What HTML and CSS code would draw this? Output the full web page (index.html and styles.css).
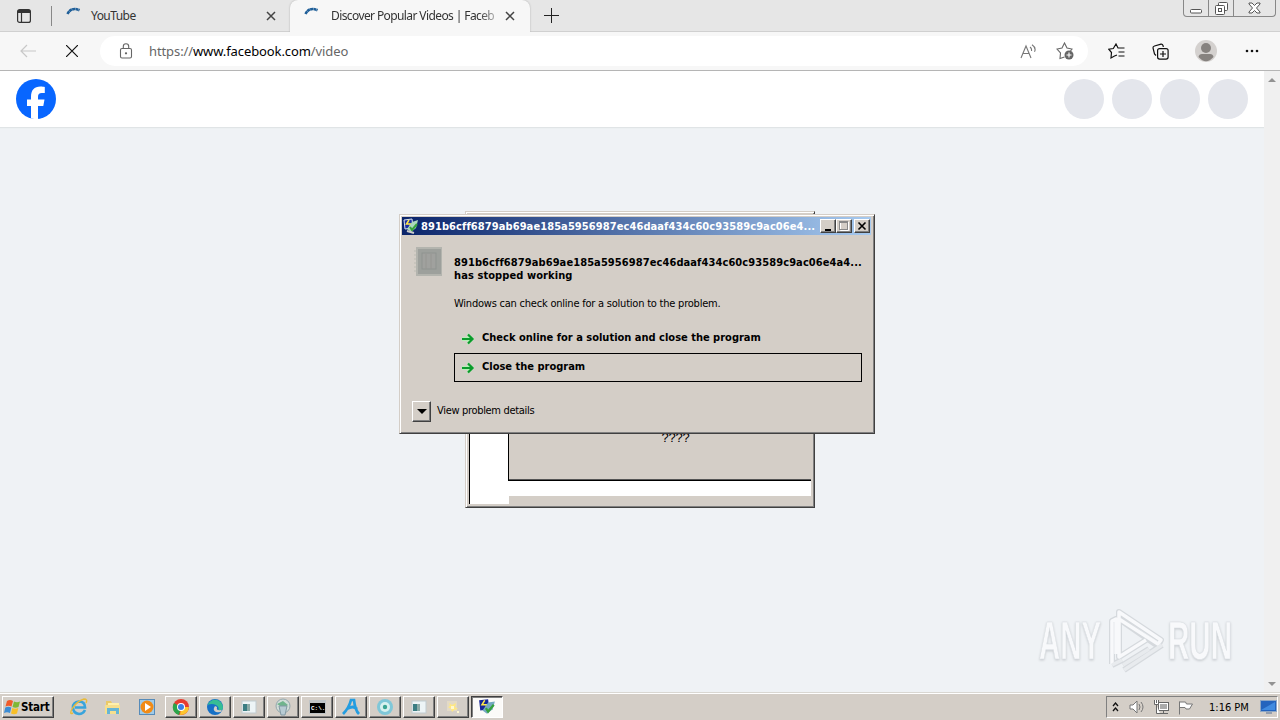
FILE: index.html
```html
<!DOCTYPE html>
<html lang="en">
<head>
    <meta charset="UTF-8">
    <meta name="viewport" content="width=device-width, initial-scale=1.0">
    <title>Discover Popular Videos | Facebook</title>
    <link rel="stylesheet" href="styles.css">
</head>
<body>
    <!-- Tabs -->
    <header class="tab-strip">
        <div class="tab-actions">
            <svg width="16" height="16" viewBox="0 0 16 16" fill="none" stroke="#333" stroke-width="1.2"><rect x="1.6" y="1.6" width="12.8" height="12.8" rx="2"/><path d="M2 3.5h12" stroke-width="3"/><path d="M5.5 4v10"/></svg>
        </div>
        <div class="tab">
            <svg class="spinner" width="16" height="16" viewBox="0 0 16 16" fill="none" stroke="#1f5f99" stroke-width="2.6"><path d="M1.500 7Q5.500 -.5 13.500 3.200" stroke-dasharray="3 .3"/></svg>
            <span class="tab-title">YouTube</span>
            <svg class="tab-close" width="10" height="10" viewBox="0 0 10 10" stroke="#444" stroke-width="1.5"><path d="M1 1l8 8M9 1l-8 8"/></svg>
        </div>
        <div class="tab active">
            <svg class="spinner" width="16" height="16" viewBox="0 0 16 16" fill="none" stroke="#1f5f99" stroke-width="2.6"><path d="M1.500 7Q5.500 -.5 13.500 3.200" stroke-dasharray="3 .3"/></svg>
            <span class="tab-title faded">Discover Popular Videos | Faceb</span>
            <svg class="tab-close" width="10" height="10" viewBox="0 0 10 10" stroke="#444" stroke-width="1.5"><path d="M1 1l8 8M9 1l-8 8"/></svg>
        </div>
        <svg class="new-tab" width="15" height="15" viewBox="0 0 15 15" stroke="#222"><path d="M0 7.500h15M7.500 0v15"/></svg>
        <div class="caption-buttons">
            <span class="caption-min"><svg width="13" height="6" viewBox="0 0 13 6"><rect x=".5" y="1.500" width="11" height="3.500" rx="1" fill="#fff" stroke="#555"/></svg></span>
            <span class="caption-restore"><svg width="13" height="13" viewBox="0 0 13 13" fill="#fff" stroke="#555"><rect x="3.500" y=".5" width="9" height="8" rx="1"/><rect x=".5" y="3.500" width="9" height="9" rx="1"/><rect x="3.500" y="6.500" width="3" height="3"/></svg></span>
            <span class="caption-close"><svg width="13" height="12" viewBox="0 0 13 12" fill="#fff" stroke="#555"><path d="M1 1h3l2.500 2.500L9 1h3v1L8.500 6l3.500 4v1H9L6.500 8.500 4 11H1v-1l3.500-4L1 2z"/></svg></span>
        </div>
    </header>

    <!-- Address bar -->
    <nav class="toolbar">
        <svg class="back" width="16" height="14" viewBox="0 0 16 14" fill="none" stroke="#c8c8c8" stroke-width="1.2"><path d="M16 7H1M7 1L1 7l6 6"/></svg>
        <svg class="stop" width="12" height="12" viewBox="0 0 12 12" stroke="#111" stroke-width="1.200"><path d="M0 0l12 12M12 0L0 12"/></svg>
        <div class="address">
            <svg class="lock" width="14" height="16" viewBox="0 0 14 16" fill="none" stroke="#666" stroke-width="1.100"><rect x="1.500" y="5.500" width="11" height="9.500" rx="1.500"/><path d="M4.300 5V3.500a2.700 2.700 0 015.400 0V5"/><circle cx="7" cy="10.300" r=".6" fill="#666"/></svg>
            <span class="url"><span>https://</span><b>www.facebook.com</b><span>/video</span></span>
            <svg class="read" width="17" height="15" viewBox="0 0 17 15" fill="none" stroke="#777" stroke-width="1.100"><path d="M1 14L6 2l5 12M3 9.500h6M10 3q2 1.500 1.500 4M12 .8q4.500 3 2.500 7"/></svg>
            <svg class="fav" width="18" height="18" viewBox="0 0 18 18" fill="none" stroke="#666" stroke-width="1.100"><path d="M8.500 15L4 16.500l.5-5.500L1 7l5-1 2.500-5L11 6l5 1-1.500 2"/><circle cx="13" cy="13" r="4.500" fill="#666" stroke="none"/><path d="M13 10.500v5M10.500 13h5" stroke="#fff"/></svg>
        </div>
        <svg class="tool" width="17" height="17" viewBox="0 0 17 17" fill="none" stroke="#111" stroke-width="1.200"><path d="M9 12l-2.500 1L3 15l.5-5.500L.8 6.200 5.300 5.500 8 1l2 4h6.500M10.500 9h6M10.500 13h6"/></svg>
        <svg class="tool" width="17" height="17" viewBox="0 0 17 17" fill="none" stroke="#111" stroke-width="1.200"><path d="M4 12.500L2.500 11 1 5Q.8 3.500 2.500 3L9 1.200q1.500-.2 2 1.300l.3 1.500"/><rect x="5.600" y="5.600" width="10.500" height="10.500" rx="2"/><path d="M11 8v6M8 11h6"/></svg>
        <svg class="avatar" width="22" height="22" viewBox="0 0 22 22"><circle cx="11" cy="11" r="11" fill="#d4d1cf"/><circle cx="11" cy="8" r="5" fill="#86827f"/><path d="M3.500 17Q4 14 7 14h8q3 0 3.500 3-7.500 8.500-15 0" fill="#86827f"/></svg>
        <svg class="dots" width="14" height="4" viewBox="0 0 14 4" fill="#111"><circle cx="2" cy="2" r="1.300"/><circle cx="7" cy="2" r="1.300"/><circle cx="12" cy="2" r="1.300"/></svg>
    </nav>

    <main class="viewport">
        <div class="page">
            <div class="fb-header">
                <svg width="40" height="40" viewBox="0 0 40 40"><circle cx="20" cy="20" r="20" fill="#0866ff"/><path d="M15 39.500V27h-4v-6.500h4v-2.500c0-7 3.200-10.500 9.500-10.500 1.800 0 3.300.2 4.300.5v6h-3c-2.800 0-3.800 1.300-3.800 4v2.500h6.500L27.300 27H22v12.900a20 20 0 01-7-.4z" fill="#fff"/></svg>
                <div class="fb-actions"><i></i><i></i><i></i><i></i></div>
            </div>
        </div>
        <div class="scrollbar"><i class="arrow-up"></i><i class="arrow-down"></i></div>
    </main>

    <!-- Windows on the desktop -->
    <section class="back-window">
        <div class="back-frame">
            <div class="back-panel">????</div>
            <div class="back-strip"></div>
            <div class="back-foot"></div>
        </div>
    </section>

    <section class="dialog">
        <div class="title-bar">
            <svg width="16" height="16" viewBox="0 0 16 16"><path d="M1 2l8-1 1 9-8 1z" fill="#1c2fa5" stroke="#d8e2ee"/><path d="M6 2L3.500 6h4v4" stroke="#ffe84a" stroke-width="1.500" fill="none"/><path d="M9 4l6-2-2 8-5 4-4-3z" fill="#acd7bd"/><path d="M7 9l2 3 5-6" stroke="#36a13c" stroke-width="2" fill="none"/><path d="M4 13l7 2" stroke="#ccc" stroke-width="2"/></svg>
            <span class="title-text">891b6cff6879ab69ae185a5956987ec46daaf434c60c93589c9ac06e4...</span>
            <span class="win-buttons">
                <i><svg width="12" height="10" viewBox="0 0 12 10"><path d="M3 9h6" stroke="#000" stroke-width="2"/></svg></i>
                <i><svg width="12" height="10" viewBox="0 0 12 10" fill="none"><path d="M2.500 1v8.500h8V1" stroke="#fff"/><rect x="1.500" y=".5" width="8" height="8" stroke="#888"/><path d="M1 1.500h9" stroke="#888"/></svg></i>
                <i class="close"><svg width="12" height="10" viewBox="0 0 12 10"><path d="M2.500 1.500l7 7M9.500 1.500l-7 7" stroke="#000" stroke-width="1.600"/></svg></i>
            </span>
        </div>
        <div class="dialog-body">
            <svg class="app-icon" width="30" height="30" viewBox="0 0 30 30"><path d="M0 4h3M0 8h3M0 12h3M0 16h3M0 20h3M0 24h3" stroke="#bcbcb3"/><rect x="2" y="0" width="26" height="29" fill="#b3b4ae"/><rect x="4" y="2" width="23" height="25" fill="#9da09c"/><rect x="8" y="6" width="14" height="16" fill="#a0a19e" stroke="#8f9390"/><path d="M12 7v15M17 7v15" stroke="#969692"/></svg>
            <div class="dialog-content">
                <h1><span>891b6cff6879ab69ae185a5956987ec46daaf434c60c93589c9ac06e4a4...</span><br><span class="stopped">has stopped working</span></h1>
                <p>Windows can check online for a solution to the problem.</p>
                <div class="command"><svg width="14" height="14" viewBox="0 0 14 14"><path d="M1 5h5.500V.8L13.500 7l-7 6.200V9H1z" fill="#b4f0b6"/><path d="M1 7h10M7 2.500L11.500 7 7 11.500" fill="none" stroke="#0c9a2c" stroke-width="2.200"/></svg><b>Check online for a solution and close the program</b></div>
                <div class="command selected"><svg width="14" height="14" viewBox="0 0 14 14"><path d="M1 5h5.500V.8L13.500 7l-7 6.200V9H1z" fill="#b4f0b6"/><path d="M1 7h10M7 2.500L11.500 7 7 11.500" fill="none" stroke="#0c9a2c" stroke-width="2.200"/></svg><b>Close the program</b></div>
            </div>
        </div>
        <div class="details"><span class="details-button"><i></i></span><span class="details-label">View problem details</span></div>
    </section>

    <svg class="watermark" width="204" height="68" viewBox="0 0 204 68">
        <g font-family="Liberation Sans Narrow, Liberation Sans, sans-serif" font-size="53" font-weight="700" stroke-width=".6">
            <text class="mark-text" x="5" y="53" textLength="62" lengthAdjust="spacingAndGlyphs">ANY</text>
            <text class="mark-text" x="134" y="53" textLength="64" lengthAdjust="spacingAndGlyphs">RUN</text>
        </g>
        <g fill="none" stroke-linejoin="round">
            <path d="M78 58V15l4-2v35M85 16V6l42 28-3 6-39-27v38l27-17M78 59l10-5M90 64l38-25M89 59l26-16" stroke="#d5d9dd" stroke-width="6"/>
            <path d="M78 58V15l4-2v35M85 16V6l42 28-3 4-39-25v38l27-17" stroke="#f8f9fb" stroke-width="3.500"/>
            <path d="M78 59l10-5M90 64l38-25M89 59l26-16" stroke="#e8ebee" stroke-width="3.500"/>
        </g>
    </svg>

    <!-- Taskbar -->
    <footer class="taskbar">
        <div class="start">
            <svg width="17" height="16" viewBox="0 0 17 16"><path d="M3 2q3-2 6 0L7.500 7.500q-3-1.500-6 0z" fill="#f15b2a"/><path d="M10 2.500q3 1.500 6 0L14.500 8q-3 1.500-6 0z" fill="#7fb735"/><path d="M1.300 8.500q3-1.500 6 0L6 14q-3-1.500-6 0z" fill="#3c8cd4"/><path d="M8.300 9q3 1.500 6 0L13 14.500q-3 1.500-6 0z" fill="#f8bf27"/></svg>
            <b>Start</b>
        </div>
        <div class="quick-launch">
            <svg width="18" height="18" viewBox="0 0 18 18" fill="none"><path d="M15 12q-2 4-6 4-6-1-6-6.500T9 3.500q6 0 6 6H5" stroke="#38a4dc" stroke-width="2.700"/><path d="M3 15q-4 2-1-4Q7 3 14 1q4 0 2 4" stroke="#e8bb3b" stroke-width="1.400"/></svg>
            <svg width="18" height="18" viewBox="0 0 18 18"><path d="M2 3h5l1 2h7v10H2z" fill="#eac968"/><path d="M4 5h11v3H4z" fill="#fff0ac"/><path d="M1 7h15v9H1z" fill="#f6df8e"/><path d="M3 10h12v6h-3v-3H6v3H3z" fill="#66b5d6"/></svg>
            <svg width="18" height="18" viewBox="0 0 18 18"><rect x="1.500" y="1.500" width="15" height="15" fill="#9fcbe9" stroke="#568bb9"/><circle cx="9" cy="9" r="6.500" fill="#f18b16"/><path d="M7 5l6 4-6 4z" fill="#fff"/></svg>
        </div>
        <div class="tasks">
            <span><svg width="18" height="18" viewBox="0 0 18 18"><circle cx="9" cy="9" r="8" fill="#e63c30"/><path d="M9 9L2 5a8 8 0 005 12z" fill="#2ba44b"/><path d="M9 9h8q-1 8-9 8z" fill="#fcc62e"/><circle cx="9" cy="9" r="4" fill="#fff"/><circle cx="9" cy="9" r="3" fill="#397fe6"/></svg></span>
            <span><svg width="18" height="18" viewBox="0 0 18 18"><circle cx="9" cy="9" r="8" fill="#1670c6"/><path d="M1.500 7A8 8 0 0117 9q0 4-5 4 2-4-2-6-4-2-8.500 0" fill="#36bd94"/><path d="M9 8q-3 4 1 6 4 1 6-1l-1-1q-5 1-4-3z" fill="#d4cec7"/></svg></span>
            <span><svg width="16" height="14" viewBox="0 0 16 14"><rect x="1" y="1" width="14" height="12" fill="#edf4f6" stroke="#c0cbd0"/><rect x="2" y="4" width="7" height="7" fill="#3a7e83"/><path d="M6 4h3v7H6z" fill="#8baaa7"/></svg></span>
            <span><svg width="18" height="18" viewBox="0 0 18 18"><circle cx="9" cy="8" r="7" fill="#d1ddd8" stroke="#94a7ad"/><path d="M3 6l6-3 5 4-4 3-4-2z" fill="#70b48d"/><path d="M5 8h8l-2 9H7z" fill="#b8cbd3" stroke="#8299a4"/></svg></span>
            <span><svg width="17" height="14" viewBox="0 0 17 14"><rect width="17" height="14" fill="#c0c4c6"/><rect x="1" y="3" width="15" height="10" fill="#000"/><text class="cmd-text" x="2" y="10">C:\.</text></svg></span>
            <span><svg width="18" height="18" viewBox="0 0 18 18" fill="none"><path d="M1 16Q7 10 9 2h3q1 10 5 14M5 11q6-4 10 0" stroke="#249de0" stroke-width="2.700"/></svg></span>
            <span><svg width="18" height="18" viewBox="0 0 18 18"><circle cx="9" cy="9" r="8" fill="#7fc7d8"/><circle cx="9" cy="9" r="5" fill="#d7f1ef"/><circle cx="9" cy="9" r="2.200" fill="#39a493"/></svg></span>
            <span><svg width="16" height="14" viewBox="0 0 16 14"><rect x="1" y="1" width="14" height="12" fill="#edf4f6" stroke="#c0cbd0"/><rect x="2" y="4" width="7" height="7" fill="#3a7e83"/><path d="M6 4h3v7H6z" fill="#8baaa7"/></svg></span>
            <span><svg width="18" height="16" viewBox="0 0 18 16"><path d="M3 2h10v10H3z" fill="#e3dac6"/><path d="M5 4l3 2 4-2-1 4 3 2-4 1-2 2-1-3-3-2 2-1z" fill="#ffe882"/><path d="M7 7h3v3H7zM13 12h2v2h-2z" fill="#fff8cf"/></svg></span>
            <span class="pressed"><svg width="18" height="18" viewBox="0 0 16 16"><path d="M1 2l8-1 1 9-8 1z" fill="#172697"/><path d="M6 2L3.500 6h4v4" stroke="#ffe84a" stroke-width="1.300" fill="none"/><path d="M9 4l6-1-2 7-5 4-4-3z" fill="#75a8c1"/><path d="M7 9l2 3 5-6" stroke="#36a13c" stroke-width="2" fill="none"/></svg></span>
        </div>
        <div class="tray">
            <svg width="7" height="10" viewBox="0 0 7 10" fill="none" stroke="#111" stroke-width="1.300"><path d="M1 4l2.500-3L6 4M1 9l2.500-3L6 9"/></svg>
            <svg class="volume" width="16" height="14" viewBox="0 0 16 14" fill="none" stroke="#777"><path d="M1 5h3l4-4v12L4 9H1z" fill="#fff"/><path d="M10 4q2 3 0 6M12 2q4 5 0 10"/></svg>
            <svg class="network" width="16" height="16" viewBox="0 0 16 16" fill="#fff" stroke="#666"><rect x="5.500" y="3.500" width="10" height="8"/><path d="M7 5h7v5H7z" fill="#aaa" stroke="none"/><path d="M7 14.500h8M10.500 12v2M3.500 6v8.500H7M1.500 1v4.500h4V1M3.500 1v3"/></svg>
            <svg class="flag" width="17" height="15" viewBox="0 0 17 15" fill="#fff" stroke="#777"><path d="M2.500 14.500V1.500M2.500 2h6l1 2h6l-3 5H9L8 7.500H3"/></svg>
            <span class="clock">1:16 PM</span>
            <svg class="desktop" width="17" height="14" viewBox="0 0 17 14"><rect x=".5" y=".5" width="16" height="11" fill="#2464bd" stroke="#8ea7c5"/><path d="M1 10L15 2v8z" fill="#408be0"/><path d="M6 13h6" stroke="#546f94"/></svg>
        </div>
    </footer>
</body>
</html>
```
FILE: styles.css
```css
:root {
    --face: #d4cec7;
    --page-bg: #eff2f5;
    --dark-edge: #404040;
    --mid-edge: #808080;
    --ui-font: "DejaVu Sans Condensed", "DejaVu Sans", sans-serif;
    --browser-font: "Noto Sans", "Open Sans", sans-serif;
}

* {
    box-sizing: border-box;
}

body {
    display: flex;
    flex-direction: column;
    width: 1280px;
    height: 720px;
    margin: 0;
    overflow: hidden;
    background: var(--page-bg);
    font-family: var(--ui-font);
    font-size: 11px;
    color: #000;
    position: relative;
}

svg {
    display: block;
    flex: none;
}

/* Tab strip */
.tab-strip {
    display: flex;
    flex: none;
    height: 32px;
    background: #e6e6e6;
    border-bottom: 1px solid #d0d0d0;
    font-family: var(--browser-font);
    font-size: 12px;
    color: #333;
}

.tab-actions {
    width: 52px;
    height: 20px;
    margin-top: 6px;
    padding: 2px 0 0 16px;
    border-right: 1px solid #888;
}

.tab {
    display: flex;
    align-items: center;
    width: 238px;
    height: 32px;
    padding: 0 14px;
}

.tab.active {
    width: 240px;
    padding-right: 15px;
    background: #f7f7f7;
    border-radius: 8px 8px 0 0;
    box-shadow: 0 0 2px #aaa;
    clip-path: inset(0 -3px 0 -3px);
}

.spinner {
    margin: -2px 9px 0 0;
}

.tab.active .spinner {
    margin-right: 11px;
}

.tab-title {
    white-space: nowrap;
    line-height: 16px;
    letter-spacing: -0.4px;
}

.tab:not(.active) .tab-title {
    letter-spacing: -0.55px;
}

.tab-title.faded {
    width: 168px;
    letter-spacing: -0.6px;
    mask-image: linear-gradient(90deg, #000 88%, rgba(0, 0, 0, 0.2));
}

.tab-close {
    margin-left: auto;
}

.new-tab {
    margin: 8px 0 0 14px;
}

.caption-buttons {
    display: flex;
    width: 93px;
    height: 17px;
    margin: 0 4px 0 auto;
    border: 1px solid #888;
    border-top: 0;
    border-radius: 0 0 4px 4px;
}

.caption-buttons span {
    display: flex;
    justify-content: center;
    align-items: center;
    width: 25px;
    border-right: 1px solid #888;
}

.caption-min {
    padding-top: 5px;
}

.caption-buttons .caption-close {
    flex: 1;
    border: 0;
}

/* Toolbar */
.toolbar {
    display: flex;
    flex: none;
    align-items: center;
    height: 39px;
    background: #f7f7f7;
    border-bottom: 1px solid #b5b5b5;
}

.back {
    margin-left: 20px;
}

.stop {
    margin-left: 30px;
}

.address {
    display: flex;
    align-items: center;
    width: 988px;
    height: 30px;
    margin-left: 22px;
    padding: 0 14px 0 19px;
    background: #fff;
    border-radius: 15px;
}

.url {
    margin-left: 16px;
    font-family: var(--browser-font);
    font-size: 13px;
    letter-spacing: -0.1px;
    color: #666;
}

.url b {
    font-weight: 400;
    color: #000;
}

.read {
    margin-left: auto;
}

.fav {
    margin-left: 19px;
}

.tool {
    margin-left: 20px;
}

.tool + .tool {
    margin-left: 27px;
}

.avatar {
    margin-left: 26px;
}

.dots {
    margin-left: 28px;
}

/* Web page */
.viewport {
    display: flex;
    flex: 1;
    min-height: 0;
}

.page {
    width: 1264px;
}

.fb-header {
    display: flex;
    justify-content: space-between;
    height: 56px;
    padding: 8px 16px;
    background: #fff;
    box-shadow: 0 1px 1px #e0e4e6;
}

.fb-actions {
    display: flex;
    gap: 8px;
}

.fb-actions i {
    width: 40px;
    height: 40px;
    border-radius: 50%;
    background: #e4e6ec;
}

.scrollbar {
    display: flex;
    flex-direction: column;
    justify-content: space-between;
    align-items: center;
    width: 16px;
    padding: 7px 0 6px;
    background: #f0f0f0;
}

.arrow-up,
.arrow-down {
    border: 4px solid transparent;
    border-top-width: 0;
    border-bottom: 4px solid #929292;
}

.arrow-down {
    transform: rotate(180deg);
}

/* Window behind the dialog */
.back-window {
    position: absolute;
    left: 465px;
    top: 211px;
    width: 350px;
    height: 297px;
    padding: 3px;
    background: var(--face);
    border: 1px solid var(--face);
    border-right-color: var(--dark-edge);
    border-bottom-color: var(--dark-edge);
    box-shadow: inset 1px 1px #fff, inset -1px -1px var(--mid-edge);
}

.back-frame {
    display: flex;
    flex-direction: column;
    height: 289px;
    border-left: 1px solid #000;
    background: #fff;
}

.back-panel {
    height: 266px;
    margin-left: 38px;
    padding-top: 215px;
    padding-left: 31px;
    background: var(--face);
    border-left: 1px solid #000;
    border-bottom: 1px solid #000;
    box-shadow: inset 0 -1px #555;
    text-align: center;
    font-family: "Liberation Sans", sans-serif;
    font-size: 13px;
    letter-spacing: -0.2px;
}

.back-strip {
    height: 15px;
}

.back-foot {
    flex: 1;
    margin-left: 39px;
    background: var(--face);
}

/* Error dialog */
.dialog {
    position: absolute;
    left: 399px;
    top: 214px;
    width: 476px;
    height: 220px;
    padding: 2px 3px;
    background: var(--face);
    border: 1px solid var(--face);
    border-right-color: var(--dark-edge);
    border-bottom-color: var(--dark-edge);
    box-shadow: inset 1px 1px #fff, inset -1px -1px var(--mid-edge);
}

.title-bar {
    display: flex;
    align-items: center;
    height: 18px;
    margin-left: -1px;
    padding-left: 1px;
    padding-right: 1px;
    background: linear-gradient(90deg, #0a246a, #a6caf0);
}

.title-text {
    margin-left: 2px;
    font-weight: 700;
    letter-spacing: 0.09px;
    color: #fff;
    white-space: nowrap;
}

.win-buttons {
    display: flex;
    margin-left: auto;
}

.win-buttons i,
.details-button {
    background: var(--face);
    border: 1px solid #fff;
    border-right-color: var(--dark-edge);
    border-bottom-color: var(--dark-edge);
    box-shadow: inset -1px -1px var(--mid-edge);
}

.win-buttons i {
    width: 16px;
    height: 14px;
    padding: 1px;
}

.win-buttons .close {
    margin-left: 2px;
}

.dialog-body {
    display: flex;
    padding: 12px 9px 0 11px;
}

.dialog-content {
    width: 408px;
    margin-left: 10px;
    padding-top: 9px;
}

.dialog h1 {
    margin: 0;
    font-size: 11px;
    line-height: 13px;
    letter-spacing: 0.09px;
    white-space: nowrap;
}

.dialog p {
    margin: 15px 0 14px;
    line-height: 13px;
    letter-spacing: -0.22px;
    white-space: nowrap;
}

.command {
    display: flex;
    align-items: center;
    height: 29px;
    padding-left: 6px;
    border: 1px solid transparent;
}

.command.selected {
    border-color: #000;
}

.command b {
    margin: -3px 0 0 7px;
    white-space: nowrap;
}

.details {
    display: flex;
    margin: 19px 0 0 9px;
}

.details-button {
    display: flex;
    justify-content: center;
    align-items: center;
    width: 19px;
    height: 21px;
}

.details-button i {
    border: 5px solid transparent;
    border-top-color: #000;
    border-bottom-width: 0;
}

.details-label {
    margin: 3px 0 0 6px;
    letter-spacing: -0.32px;
}

/* Corner logo */
.watermark {
    position: absolute;
    left: 1034px;
    top: 606px;
}

.mark-text {
    fill: #f8f9fb;
    stroke: #dce0e4;
    filter: drop-shadow(0 1px 1px #c4c8cc);
}

/* Taskbar */
.taskbar {
    display: flex;
    flex: none;
    align-items: flex-start;
    height: 28px;
    padding: 3px 2px 0;
    background: var(--face);
    border-top: 1px solid #d9d7d2;
    box-shadow: inset 0 1px #fff;
}

.start,
.tasks span {
    display: flex;
    align-items: center;
    height: 22px;
    border: 1px solid #fff;
    border-right-color: var(--dark-edge);
    border-bottom-color: var(--dark-edge);
    box-shadow: inset -1px -1px var(--mid-edge);
}

.start {
    width: 52px;
    padding-left: 1px;
    font-size: 11.5px;
    letter-spacing: -0.2px;
}

.quick-launch {
    display: flex;
    gap: 16px;
    margin: 2px 0 0 16px;
}

.tasks {
    display: flex;
    gap: 2px;
    margin-left: 9px;
}

.tasks span {
    justify-content: center;
    width: 32px;
}

.tasks .pressed {
    background: #fbfaf8;
    border-color: var(--dark-edge) #fff #fff var(--dark-edge);
    box-shadow: inset 1px 1px var(--mid-edge);
}

.cmd-text {
    fill: #fff;
    font: bold 6px "Liberation Mono", monospace;
}

.tray {
    display: flex;
    align-items: center;
    width: 172px;
    height: 22px;
    margin-left: auto;
    padding-left: 5px;
    border: 1px solid var(--mid-edge);
    border-right-color: #fff;
    border-bottom-color: #fff;
}

.volume {
    margin-left: 10px;
}

.network {
    margin-left: 8px;
}

.flag {
    margin-left: 8px;
}

.clock {
    margin-left: 15px;
    white-space: nowrap;
}

.desktop {
    margin-left: auto;
}
```
